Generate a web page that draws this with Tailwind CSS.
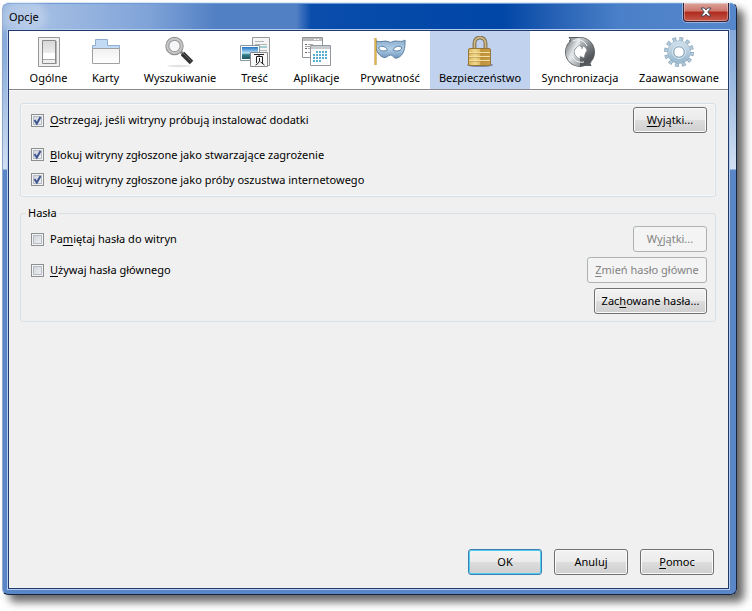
<!DOCTYPE html>
<html lang="pl">
<head>
<meta charset="utf-8">
<meta name="viewport" content="width=device-width, initial-scale=1">
<title>Opcje</title>
<script src="https://cdn.jsdelivr.net/npm/@tailwindcss/browser@4"></script>
</head>
<body class="flex min-h-screen bg-white pt-[2px] pr-[15px] pb-[16px] pl-[2px] font-['Noto_Sans','Open_Sans',sans-serif] text-[11px] leading-4 text-black">
<div class="relative flex grow flex-col rounded-t-[7px] rounded-b-[6px] border border-[#15233c] border-t-[#dce8f6] border-l-[#8ea6ca] bg-[linear-gradient(180deg,#7fa3d8_0,#8fb0dd_60px,#d2e0f2_166px,#5a85c6_167px,#5a85c6_100%)] pr-[7px] pb-[5px] pl-[5px] shadow-[7px_7px_8px_rgba(0,0,0,0.6)]">
  <header class="-mr-[7px] -ml-[5px] flex h-[27px] items-center rounded-t-[6px] border-t border-[#6f9bd4] bg-[linear-gradient(90deg,#8fb0dd_0%,#a0bbe2_7%,#7fa3d8_20%,#5280c4_29%,#5280c4_40%,#0a4dab_42%,#0046a6_68%,#2560b4_75%,#4a80c8_84%,#5687cb_100%)] pl-[6px]">
    <h1 class="rounded-full bg-white/30 font-normal shadow-[0_0_8px_8px_rgba(255,255,255,0.3)]">Opcje</h1>
    <button type="button" aria-label="Zamknij" class="absolute top-0 right-[7px] flex h-[19px] w-[46px] items-center justify-center rounded-b-[4px] border border-t-0 border-[#3b2135] bg-[linear-gradient(180deg,#dba49b_0,#cd766b_45%,#b02a1d_50%,#c4584a_100%)] shadow-[inset_0_0_0_1px_rgba(255,255,255,0.35),0_0_0_1px_rgba(255,255,255,0.4)]">
      <svg class="h-[10px] w-[12px]" viewBox="0 0 12 10"><path d="M1 1h3.300L6 3 7.700 1H11L7.800 5 11 9H7.700L6 7 4.300 9H1l3.200-4z" fill="#fff" stroke="#4a4658" stroke-width="1"/></svg>
    </button>
  </header>
  <main class="flex grow flex-col border border-[#20396b] bg-[#f0f0f0] shadow-[0_0_0_1px_#b4cdee]">
    <nav aria-label="Kategorie" class="grid h-[59px] grid-cols-[57fr_57fr_92fr_57fr_67fr_80fr_100fr_100fr_98fr] border-b border-[#8b858d] bg-white pl-[11px]">
      <button type="button" class="flex flex-col items-center gap-[2px] pt-[5px]">
        <svg class="h-8 w-8 shrink-0" viewBox="0 0 32 32"><defs><linearGradient id="sw" x2="0" y2="1"><stop stop-color="#d7d7d7"/><stop offset=".6" stop-color="#eee"/></linearGradient></defs><path d="M5.500 1.500h21v29h-21z" fill="#f0f0f0" stroke="#999"/><path d="M10 5h14v23H10z" fill="#b5b5b5"/><path d="M9.500 4.500h13v23h-13z" fill="url(#sw)" stroke="#8a8a8a"/><path d="M10 17h12v6H10z" fill="#fff"/><path d="M10 23.500h12" stroke="#aaa"/></svg>
        <span>Ogólne</span>
      </button>
      <button type="button" class="flex flex-col items-center gap-[2px] pt-[5px]">
        <svg class="h-8 w-8 shrink-0" viewBox="0 0 32 32"><defs><linearGradient id="fo" x2="0" y2="1"><stop stop-color="#f0f0f0"/><stop offset="1" stop-color="#fff"/></linearGradient></defs><path d="M2.500 9.500h3v-6h12v6h12v5h-27z" fill="#c3daf5" stroke="#8eadd0"/><path d="M2.500 12.500h27v15h-27z" fill="url(#fo)" stroke="#a0a0a0"/><path d="M3 11h26" stroke="#c3daf5"/></svg>
        <span>Karty</span>
      </button>
      <button type="button" class="flex flex-col items-center gap-[2px] pt-[5px]">
        <svg class="h-8 w-8 shrink-0" viewBox="0 0 32 32"><ellipse cx="15" cy="30" rx="12" ry="1.200" fill="#e3e3e3"/><path d="m16 15 4 4" stroke="#888" stroke-width="3"/><path d="m18.500 17.500 9 9" stroke="#333" stroke-width="5"/><path d="m19 17 8 8" stroke="#666" stroke-width="1"/><circle cx="10.500" cy="10" r="7.200" fill="#f4f6f8" stroke="#8c8c8c" stroke-width="4"/><circle cx="10.500" cy="10" r="7.200" fill="none" stroke="#c6c6c6" stroke-width="2.200"/></svg>
        <span>Wyszukiwanie</span>
      </button>
      <button type="button" class="flex flex-col items-center gap-[2px] pt-[5px]">
        <svg class="h-8 w-8 shrink-0" viewBox="0 0 32 32"><defs><linearGradient id="ph" x2="0" y2="1"><stop stop-color="#2474c4"/><stop offset=".5" stop-color="#b9e2f5"/><stop offset=".65" stop-color="#337c85"/><stop offset="1" stop-color="#1e5565"/></linearGradient></defs><path d="M13.500 1.500h17v28h-17z" fill="#f5f5f5" stroke="#999"/><path d="M16 5.500h9M16 8.500h12M16 14.500h12" stroke="#b5b5b5"/><path d="M16 11h12" stroke="#4ba4ae"/><path d="M1.500 9.500h19v15h-19z" fill="#fff" stroke="#8b98a3"/><path d="M3 11h16v12H3z" fill="url(#ph)"/><path d="M11.500 16.500h17v14h-17z" fill="#f8f8f8" stroke="#888"/><path d="M15 18.500h10M20.500 18.500l-1 2M17.500 27v-6.500h6V27M20.500 22v3q-1 3-4 4M21.500 26l4 3" fill="none" stroke="#222"/></svg>
        <span>Treść</span>
      </button>
      <button type="button" class="flex flex-col items-center gap-[2px] pt-[5px]">
        <svg class="h-8 w-8 shrink-0" viewBox="0 0 32 32"><path d="M1.500 1.500h20v20h-20z" fill="#fff" stroke="#8f9499"/><path d="M2 2h19v3H2z" fill="#bbb"/><path d="M13 3.500h6" stroke="#fff" stroke-dasharray="2 1"/><path d="M4 8.500h2M4 12.500h2M4 16.500h2" stroke="#666"/><path d="M7 8.500h5M7 12.500h3M4 10.500h6M7 16.500h3" stroke="#aaa"/><path d="M9.500 9.500h20v20h-20z" fill="#fff" stroke="#91979d"/><path d="M10 10h19v3H10z" fill="#c6cbd0"/><path d="M15 16h12M12 19h15M12 22h15M12 25h9" stroke="#56afd0" stroke-width="2" stroke-dasharray="2 1"/></svg>
        <span>Aplikacje</span>
      </button>
      <button type="button" class="flex flex-col items-center gap-[2px] pt-[5px]">
        <svg class="h-8 w-8 shrink-0" viewBox="0 0 32 32"><defs><linearGradient id="mk" x2="0" y2="1"><stop stop-color="#8aadd0"/><stop offset=".5" stop-color="#b3cee6"/><stop offset="1" stop-color="#6d94bd"/></linearGradient></defs><path d="M2 5c4 2 8-1 12 .500 2 1 3 1 5 0C23 4 27 7 31 4c.500 7-1 16-8 18-3 1-4-3-6.500-3s-4 3.500-7 2.500C3 19 1 12 2 5z" fill="url(#mk)" stroke="#5f819e"/><path d="M4.500 12c2-3 7-2 9 2-3 1.500-7 1.500-9-2zM19 14c2-4 7-5 9-2-2 3.500-6 3.500-9 2z" fill="#fff" stroke="#587ea5"/><path d="M1.500 2v27" stroke="#b48521" stroke-width="2"/><path d="M1.500 2v27" stroke="#e0b64c"/></svg>
        <span>Prywatność</span>
      </button>
      <button type="button" aria-current="page" class="flex flex-col items-center gap-[2px] bg-[#c1d2ee] pt-[5px]">
        <svg class="h-8 w-8 shrink-0" viewBox="0 0 32 32"><defs><linearGradient id="lk"><stop stop-color="#d9b458"/><stop offset=".3" stop-color="#f0d88e"/><stop offset=".5" stop-color="#dfbe66"/><stop offset=".56" stop-color="#c0923a"/><stop offset="1" stop-color="#c99c45"/></linearGradient></defs><ellipse cx="16" cy="29" rx="13" ry="2" fill="#7f8aa8"/><path d="M10.500 14V7a5.500 5.500 0 0 1 11 0v7" fill="none" stroke="#7c6946" stroke-width="3.800"/><path d="M10.500 14V7a5.500 5.500 0 0 1 11 0v7" fill="none" stroke="#cbb887" stroke-width="1.800"/><rect x="4.500" y="12.500" width="22" height="17" rx="1.500" fill="url(#lk)" stroke="#94753a"/><path d="M5 16.500h21M5 20.500h21M5 24.500h21" stroke="#f3dfa0"/><path d="M5 17.500h21M5 21.500h21M5 25.500h21" stroke="#b18a3c" stroke-opacity=".5"/></svg>
        <span>Bezpieczeństwo</span>
      </button>
      <button type="button" class="flex flex-col items-center gap-[2px] pt-[5px]">
        <svg class="h-8 w-8 shrink-0" viewBox="0 0 32 32"><defs><linearGradient id="sy" x2="1" y2="1"><stop stop-color="#9a9ea2"/><stop offset=".4" stop-color="#e6e8ea"/><stop offset="1" stop-color="#9da1a4"/></linearGradient><linearGradient id="sz" x2=".4" y2="1"><stop stop-color="#c2c5c8"/><stop offset=".5" stop-color="#7b8084"/><stop offset="1" stop-color="#54585c"/></linearGradient></defs><circle cx="16" cy="16" r="10" fill="none" stroke="#5a5f63" stroke-width="10"/><path d="M5 1.500h11v5L9 7 5 5l2-1z" fill="#9ea2a5" stroke="#5a5f63"/><path d="M27 29.500H16v-4l8-1 3 2-1 1z" fill="#5f6367" stroke="#5a5f63"/><path d="M16 6a10 10 0 0 1 0 20" fill="none" stroke="url(#sz)" stroke-width="8.500"/><path d="M16 26a10 10 0 0 1 0-20" fill="none" stroke="url(#sy)" stroke-width="8.500"/><path d="M9 5c6-3 12 0 14 5" fill="none" stroke="#f1f2f3"/><path d="M20 26c-5 1-10-1-12-6" fill="none" stroke="#f8f8f8"/><path d="m16 9-3 2-3 4 1 4 3 3 2 1v-3l4 2 1-4 2-4-2-3-2-1-1 3z" fill="#fff" stroke="#777b7f" stroke-width=".5"/></svg>
        <span>Synchronizacja</span>
      </button>
      <button type="button" class="flex flex-col items-center gap-[2px] pt-[5px]">
        <svg class="h-8 w-8 shrink-0" viewBox="0 0 32 32"><defs><linearGradient id="gr" x2="0" y2="1"><stop stop-color="#cbdce9"/><stop offset="1" stop-color="#9dbbd1"/></linearGradient></defs><circle cx="16" cy="16" r="12.800" fill="none" stroke="#8ba6bb" stroke-width="4.400" stroke-dasharray="3.700 3.002"/><circle cx="16" cy="16" r="12.800" fill="none" stroke="#b4cbdc" stroke-width="3.200" stroke-dasharray="2.300 4.402" stroke-dashoffset="-.7"/><circle cx="16" cy="16" r="8.400" fill="none" stroke="#8ba6bb" stroke-width="6.400"/><circle cx="16" cy="16" r="8.400" fill="none" stroke="url(#gr)" stroke-width="5.600"/><circle cx="16" cy="16" r="6.500" fill="none" stroke="#dbe8f1"/><circle cx="16" cy="16" r="5.200" fill="#fff" stroke="#8ba6bb"/></svg>
        <span>Zaawansowane</span>
      </button>
    </nav>
    <form class="flex grow flex-col border-t border-[#f8f8f8] pt-[12px] pr-[12px] pb-[13px] pl-[11px]">
      <fieldset aria-label="Ochrona" class="rounded-[3px] border border-[#d5dfe5] px-[8px] pt-[3px] pb-[4px] shadow-[inset_0_0_0_1px_#f8f8f8]">
        <div class="mb-[9px] flex h-[26px] items-center justify-between">
          <label class="flex items-center gap-[6px] pl-[2px]"><span class="relative flex"><input type="checkbox" checked class="peer size-[13px] appearance-none border border-[#8e8f8f] bg-[linear-gradient(135deg,#cbcfd5,#f6f6f6)] shadow-[inset_0_0_0_1px_#f4f4f4,inset_0_0_0_2px_#b5bcc7]"><svg class="pointer-events-none absolute inset-0 size-[13px] opacity-0 peer-checked:opacity-100" viewBox="0 0 13 13"><path d="m3.500 6 2.300 3.500L9.500 3" fill="none" stroke="#40568f" stroke-width="2"/></svg></span><span><u class="underline-offset-2">O</u>strzegaj, jeśli witryny próbują instalować dodatki</span></label>
          <button type="button" class="h-[26px] w-[74px] rounded-[3px] border border-[#707070] bg-[linear-gradient(180deg,#f2f2f2_0,#ebebeb_50%,#dddddd_50%,#cfcfcf_100%)] shadow-[inset_0_0_0_1px_#fafafa]"><u class="underline-offset-2">W</u>yjątki...</button>
        </div>
        <label class="flex h-[25px] items-center gap-[6px] pl-[2px]"><span class="relative flex"><input type="checkbox" checked class="peer size-[13px] appearance-none border border-[#8e8f8f] bg-[linear-gradient(135deg,#cbcfd5,#f6f6f6)] shadow-[inset_0_0_0_1px_#f4f4f4,inset_0_0_0_2px_#b5bcc7]"><svg class="pointer-events-none absolute inset-0 size-[13px] opacity-0 peer-checked:opacity-100" viewBox="0 0 13 13"><path d="m3.500 6 2.300 3.500L9.500 3" fill="none" stroke="#40568f" stroke-width="2"/></svg></span><span><u class="underline-offset-2">B</u>lokuj witryny zgłoszone jako stwarzające zagrożenie</span></label>
        <label class="flex h-[25px] items-center gap-[6px] pl-[2px]"><span class="relative flex"><input type="checkbox" checked class="peer size-[13px] appearance-none border border-[#8e8f8f] bg-[linear-gradient(135deg,#cbcfd5,#f6f6f6)] shadow-[inset_0_0_0_1px_#f4f4f4,inset_0_0_0_2px_#b5bcc7]"><svg class="pointer-events-none absolute inset-0 size-[13px] opacity-0 peer-checked:opacity-100" viewBox="0 0 13 13"><path d="m3.500 6 2.300 3.500L9.500 3" fill="none" stroke="#40568f" stroke-width="2"/></svg></span><span>Blo<u class="underline-offset-2">k</u>uj witryny zgłoszone jako próby oszustwa internetowego</span></label>
      </fieldset>
      <fieldset class="mt-[8px] rounded-[3px] border border-[#d5dfe5] px-[8px] pb-[7px]">
        <legend class="-ml-[3px] px-[2px]">Hasła</legend>
        <div class="flex flex-col gap-[5px] pt-[5px]">
          <div class="flex h-[26px] items-center justify-between">
            <label class="flex items-center gap-[6px] pl-[2px]"><span class="relative flex"><input type="checkbox" class="peer size-[13px] appearance-none border border-[#8e8f8f] bg-[linear-gradient(135deg,#cbcfd5,#f6f6f6)] shadow-[inset_0_0_0_1px_#f4f4f4,inset_0_0_0_2px_#b5bcc7]"><svg class="pointer-events-none absolute inset-0 size-[13px] opacity-0 peer-checked:opacity-100" viewBox="0 0 13 13"><path d="m3.500 6 2.300 3.500L9.500 3" fill="none" stroke="#40568f" stroke-width="2"/></svg></span><span>Pa<u class="underline-offset-2">m</u>iętaj hasła do witryn</span></label>
            <button type="button" disabled class="h-[26px] w-[74px] rounded-[3px] border border-[#adb2b5] bg-[#f4f4f4] text-[#838383]">W<u class="underline-offset-2">y</u>jątki...</button>
          </div>
          <div class="flex h-[26px] items-center justify-between">
            <label class="flex items-center gap-[6px] pl-[2px]"><span class="relative flex"><input type="checkbox" class="peer size-[13px] appearance-none border border-[#8e8f8f] bg-[linear-gradient(135deg,#cbcfd5,#f6f6f6)] shadow-[inset_0_0_0_1px_#f4f4f4,inset_0_0_0_2px_#b5bcc7]"><svg class="pointer-events-none absolute inset-0 size-[13px] opacity-0 peer-checked:opacity-100" viewBox="0 0 13 13"><path d="m3.500 6 2.300 3.500L9.500 3" fill="none" stroke="#40568f" stroke-width="2"/></svg></span><span><u class="underline-offset-2">U</u>żywaj hasła głównego</span></label>
            <button type="button" disabled class="h-[26px] w-[120px] rounded-[3px] border border-[#adb2b5] bg-[#f4f4f4] text-[#838383]"><u class="underline-offset-2">Z</u>mień hasło główne</button>
          </div>
          <button type="button" class="h-[26px] w-[113px] self-end rounded-[3px] border border-[#707070] bg-[linear-gradient(180deg,#f2f2f2_0,#ebebeb_50%,#dddddd_50%,#cfcfcf_100%)] shadow-[inset_0_0_0_1px_#fafafa]">Zac<u class="underline-offset-2">h</u>owane hasła...</button>
        </div>
      </fieldset>
      <div class="mt-auto flex justify-end gap-[12px] pr-[2px]">
        <button type="submit" class="h-[26px] w-[74px] rounded-[3px] border border-[#3c7fb1] bg-[linear-gradient(180deg,#f2f2f2_0,#ebebeb_50%,#dddddd_50%,#cfcfcf_100%)] shadow-[inset_0_0_0_1px_#50cdf0]">OK</button>
        <button type="button" class="h-[26px] w-[74px] rounded-[3px] border border-[#707070] bg-[linear-gradient(180deg,#f2f2f2_0,#ebebeb_50%,#dddddd_50%,#cfcfcf_100%)] shadow-[inset_0_0_0_1px_#fafafa]">Anuluj</button>
        <button type="button" class="h-[26px] w-[74px] rounded-[3px] border border-[#707070] bg-[linear-gradient(180deg,#f2f2f2_0,#ebebeb_50%,#dddddd_50%,#cfcfcf_100%)] shadow-[inset_0_0_0_1px_#fafafa]"><u class="underline-offset-2">P</u>omoc</button>
      </div>
    </form>
  </main>
</div>
</body>
</html>
